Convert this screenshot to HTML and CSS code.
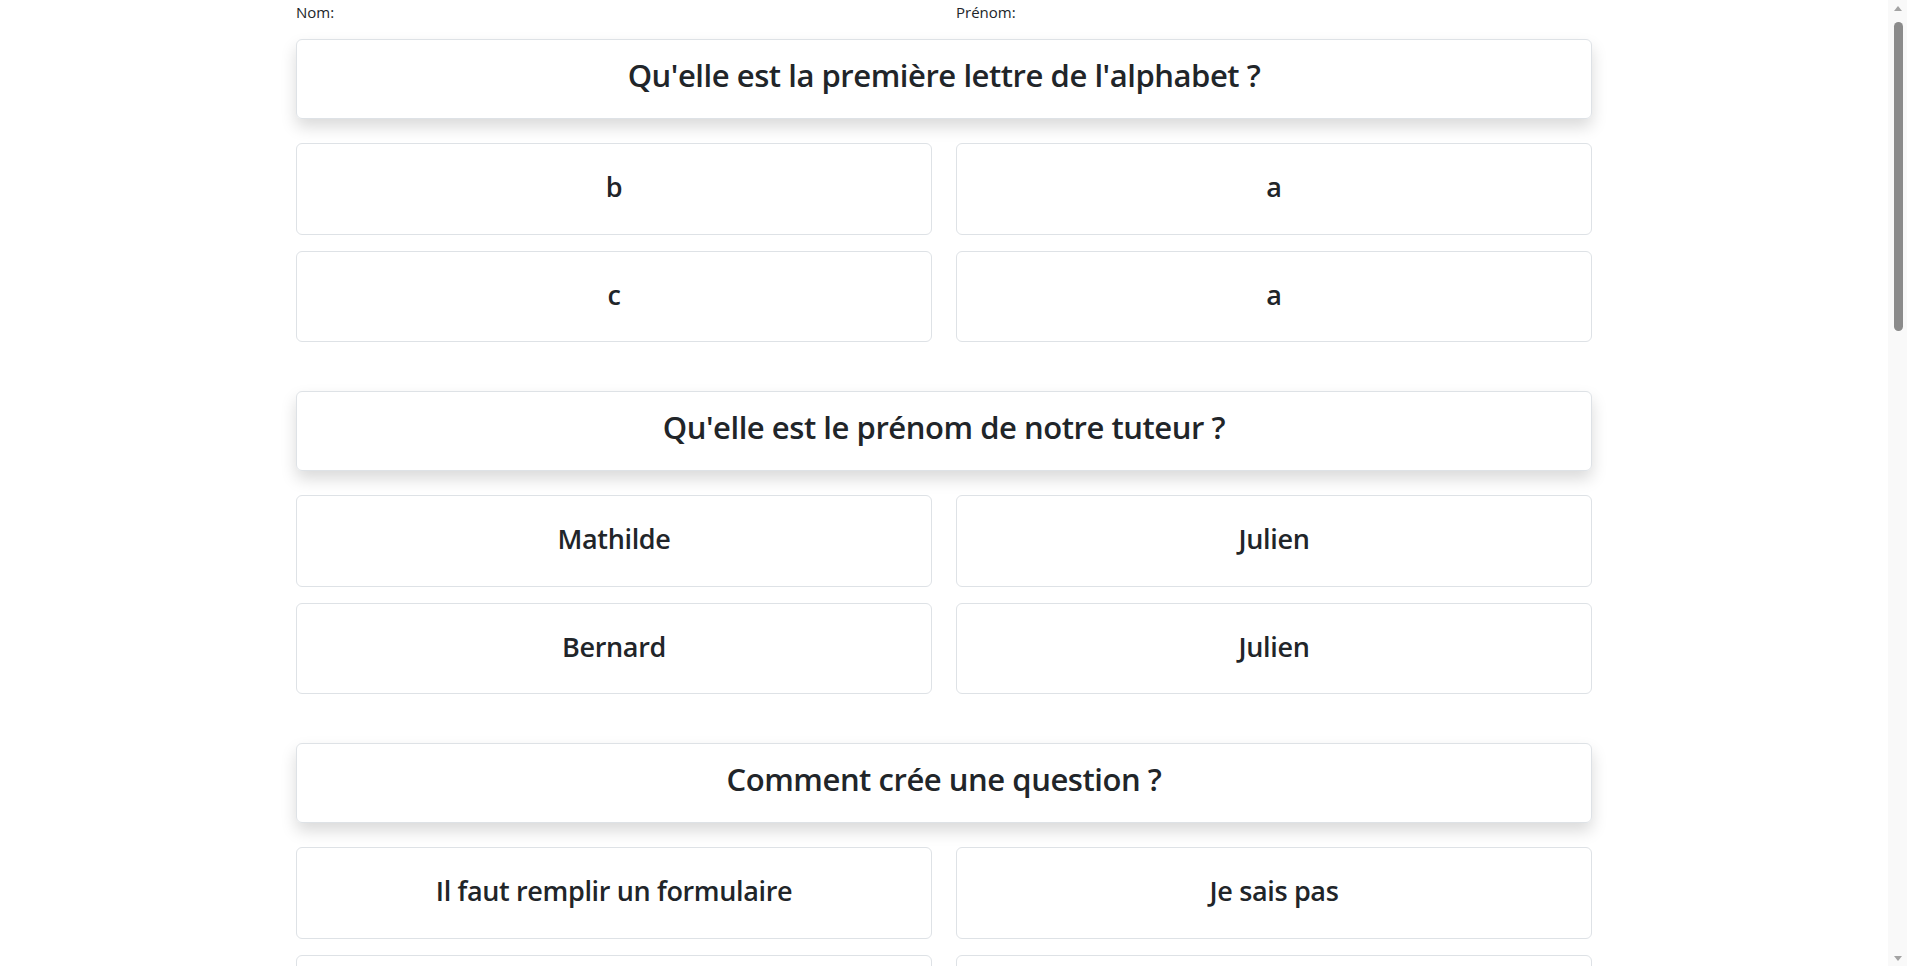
FILE: index.html
```html
<!DOCTYPE html>
<html lang="fr">
<head>
<meta charset="utf-8">
<title>Quiz</title>
<link rel="stylesheet" href="styles.css">
</head>
<body>
<div class="viewport">
  <div class="container">
    <div class="names">
      <div class="label">Nom:</div>
      <div class="label">Prénom:</div>
    </div>

    <section class="quiz">
      <div class="question"><h2>Qu'elle est la première lettre de l'alphabet ?</h2></div>
      <div class="answers">
        <div class="answer"><h3>b</h3></div>
        <div class="answer"><h3>a</h3></div>
        <div class="answer"><h3>c</h3></div>
        <div class="answer"><h3>a</h3></div>
      </div>
    </section>

    <section class="quiz">
      <div class="question"><h2>Qu'elle est le prénom de notre tuteur ?</h2></div>
      <div class="answers">
        <div class="answer"><h3>Mathilde</h3></div>
        <div class="answer"><h3>Julien</h3></div>
        <div class="answer"><h3>Bernard</h3></div>
        <div class="answer"><h3>Julien</h3></div>
      </div>
    </section>

    <section class="quiz">
      <div class="question"><h2>Comment crée une question ?</h2></div>
      <div class="answers">
        <div class="answer"><h3>Il faut remplir un formulaire</h3></div>
        <div class="answer"><h3>Je sais pas</h3></div>
        <div class="answer"><h3>&nbsp;</h3></div>
        <div class="answer"><h3>&nbsp;</h3></div>
      </div>
    </section>
  </div>
</div>
<div class="scrollbar" aria-hidden="true">
  <span class="arrow arrow-up"></span>
  <span class="thumb"></span>
  <span class="arrow arrow-down"></span>
</div>
</body>
</html>
```

FILE: styles.css
```css
*, *::before, *::after { box-sizing: border-box; }

html, body { height: 100%; }

body {
  margin: 0;
  display: flex;
  overflow: hidden;
  font-family: "Open Sans", "Noto Sans", sans-serif;
  font-size: 16px;
  line-height: 1.5;
  color: #212529;
  background: #fff;
}

.viewport {
  flex: 1;
  min-width: 0;
  height: 100%;
  overflow: hidden;
}

.container {
  max-width: 1320px;
  margin: 0 auto;
  padding: 0 12px;
}

.names {
  display: grid;
  grid-template-columns: 1fr 1fr;
  column-gap: 24px;
  margin-bottom: 15px;
}

.label {
  font-size: 15px;
  line-height: 24px;
}

.question {
  border: 1px solid #dee2e6;
  border-radius: 6px;
  box-shadow: 0 8px 16px rgba(0, 0, 0, 0.15);
  padding: 16px;
  margin-bottom: 24px;
  text-align: center;
}

.question h2 {
  margin: 0 0 8px;
  font-size: 31px;
  font-weight: 600;
  letter-spacing: -0.45px;
  line-height: 38px;
}

.answers {
  display: grid;
  grid-template-columns: 1fr 1fr;
  gap: 16px 24px;
  margin-bottom: 49px;
}

.answer {
  border: 1px solid #dee2e6;
  border-radius: 6px;
  padding: 26px 16px 22px;
  text-align: center;
}

.answer h3 {
  margin: 0 0 8px;
  font-size: 27px;
  font-weight: 600;
  letter-spacing: -0.35px;
  line-height: 33.6px;
}

/* classic scrollbar drawn at the right edge */
.scrollbar {
  flex: 0 0 19px;
  height: 100%;
  background: #f9f9f9;
  display: flex;
  flex-direction: column;
  align-items: center;
  padding: 6px 0 5px;
}

.arrow {
  width: 0;
  height: 0;
  border-left: 4px solid transparent;
  border-right: 4px solid transparent;
}

.arrow-up { border-bottom: 5px solid #a3a3a3; }

.arrow-down {
  margin-top: auto;
  border-top: 5px solid #a3a3a3;
}

.thumb {
  width: 9px;
  height: 309px;
  margin-top: 11px;
  margin-left: 1px;
  border-radius: 5px;
  background: #8b8b8b;
}
```
